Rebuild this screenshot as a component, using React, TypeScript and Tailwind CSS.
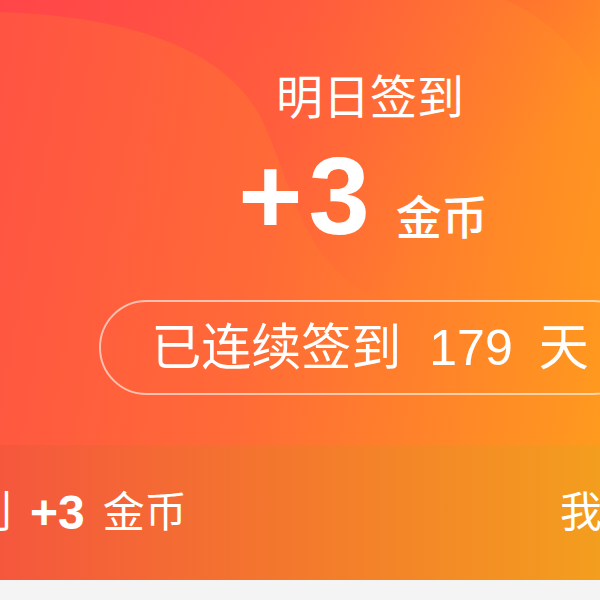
import React from "react";

export default function App() {
  const cjk = { fontFamily: '"Liberation Sans", "Noto Sans CJK SC", sans-serif' } as React.CSSProperties;
  return (
    <div
      className="relative w-[600px] h-[600px] overflow-hidden bg-[#f4f4f4] text-white font-['Liberation_Sans','Noto_Sans_CJK_SC',sans-serif]"
    >
      <div className="relative h-[445px] bg-[linear-gradient(100deg,#ff5343_0%,#ff6a37_45%,#ff9a1e_100%)]">
        <svg
          className="absolute inset-0"
          width="600"
          height="445"
          viewBox="0 0 600 445"
          preserveAspectRatio="none"
        >
          <defs>
            <linearGradient id="redTint" x1="0" y1="0" x2="1" y2="0.5">
              <stop offset="0" stopColor="#ff3a4e" stopOpacity="0.55" />
              <stop offset="0.55" stopColor="#ff3a4e" stopOpacity="0.22" />
              <stop offset="0.9" stopColor="#ff3a4e" stopOpacity="0" />
            </linearGradient>
            <linearGradient id="cornerTint" x1="0" y1="0" x2="1" y2="1">
              <stop offset="0" stopColor="#ff5a34" stopOpacity="0.25" />
              <stop offset="1" stopColor="#ff5a34" stopOpacity="0" />
            </linearGradient>
          </defs>
          <path
            d="M0,0 L0,12 C120,16 225,45 262,120 C292,185 300,250 360,290 C400,315 470,322 600,330 L600,0 Z"
            fill="url(#redTint)"
          />
          <path d="M505,0 C555,22 590,60 600,100 L600,0 Z" fill="url(#cornerTint)" />
        </svg>

        <div className="relative w-[740px] flex flex-col items-center pt-[74px]">
          <div className="text-[47px] leading-none" style={cjk}>
            明日签到
          </div>
          <div className="mt-[20px] flex items-baseline mr-[14px]">
            <span className="text-[110px] leading-none font-bold tracking-[6px] font-['Liberation_Sans',sans-serif]">
              +3
            </span>
            <span className="ml-[20px] text-[46px] leading-none font-medium" style={cjk}>
              金币
            </span>
          </div>
          <div className="mt-[49px] w-[542px] h-[95px] rounded-full border-2 border-white/60 flex items-center justify-center">
            <span className="text-[50px] leading-none" style={cjk}>
              已连续签到
            </span>
            <span className="ml-[28px] text-[50px] leading-none font-['Liberation_Sans',sans-serif]">
              179
            </span>
            <span className="ml-[26px] text-[50px] leading-none" style={cjk}>
              天
            </span>
          </div>
        </div>
      </div>

      <div className="h-[135px] flex items-center bg-[linear-gradient(90deg,#f5573d_0%,#f3762e_45%,#f39e1e_100%)]">
        <span className="ml-[-76px] text-[44px] leading-none" style={cjk}>
          签到
        </span>
        <span className="ml-[18px] text-[48px] leading-none font-bold font-['Liberation_Sans',sans-serif]">
          +3
        </span>
        <span className="ml-[18px] text-[42px] leading-none" style={cjk}>
          金币
        </span>
        <span className="ml-auto mr-[-128px] text-[42px] leading-none whitespace-nowrap" style={cjk}>
          我的金币
        </span>
      </div>
    </div>
  );
}
